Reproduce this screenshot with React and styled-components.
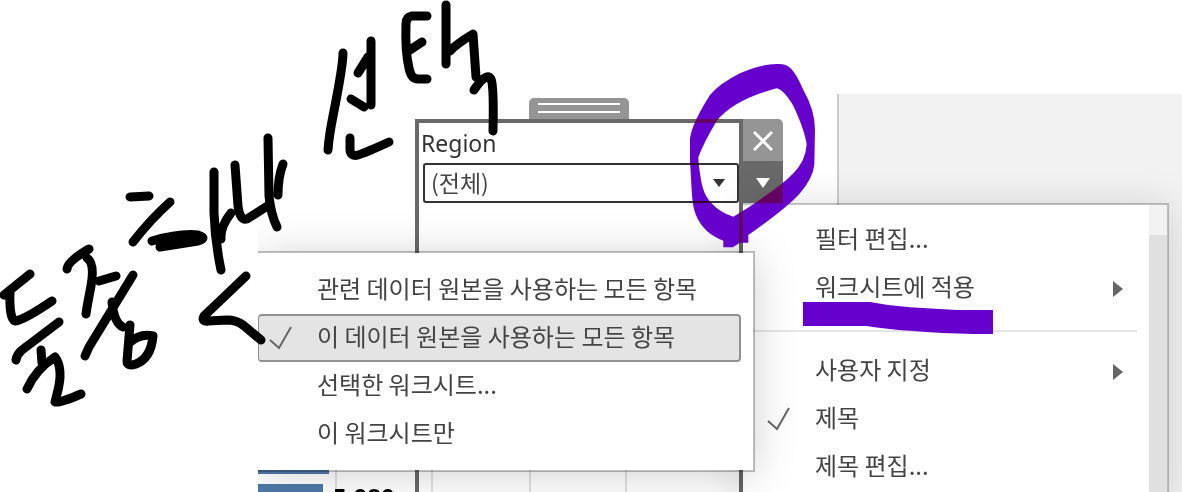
import React from "react";
import styled, { createGlobalStyle } from "styled-components";

const applyItems = [
  { label: "관련 데이터 원본을 사용하는 모든 항목" },
  { label: "이 데이터 원본을 사용하는 모든 항목", checked: true },
  { label: "선택한 워크시트..." },
  { label: "이 워크시트만" },
];

const filterItems = [{ label: "필터 편집..." }, { label: "워크시트에 적용", more: true }];

const titleItems = [
  { label: "사용자 지정", more: true },
  { label: "제목", checked: true },
  { label: "제목 편집..." },
];

const penStrokes = [
  // 둘
  "M30 273L4 294M10 289Q9 318 15 320Q24 319 52 300",
  "M59 321L22 349Q17 353 16 359M41 349L42 362",
  "M27 388Q36 368 55 356Q64 368 57 393L55 401Q60 402 81 393",
  // 중
  "M67 268Q68 260 89 248M87 257Q95 262 91 285Q87 305 86 313M99 280L116 275",
  "M133 274L89 346L85 355M112 301Q114 322 123 326",
  "M130 324L127 360Q127 366 136 363Q151 357 153 335Q140 332 129 342",
  // 하나
  "M130 196L149 195M170 201Q150 219 133 241",
  "M152 240Q180 232 198 234Q208 237 198 240L160 246",
  "M214 171L214 212Q215 240 221 269M231 212Q220 226 221 238",
  "M235 164L238 205Q240 220 247 218L269 204",
  "M268 137L269 195Q271 214 277 226M283 163Q278 176 278 194",
  // <
  "M246 275L204 315Q201 321 208 320L227 319Q236 319 243 324L261 339",
  // 선
  "M343 52Q343 65 333 115Q329 135 328 149M371 40L371 104M368 56L358 72M351 98L364 106",
  "M350 137L350 149Q351 156 358 154Q365 152 389 141",
  // 택
  "M427 15L412 15Q406 16 406 23Q405 50 409 67Q411 78 418 78L427 78M422 41L410 49",
  "M446 4L446 63M450 50Q455 44 473 33L476 76M474 89Q486 71 491 78Q494 85 493 130",
];

const Check = () => (
  <CheckIcon viewBox="0 0 24 24" aria-hidden="true">
    <path d="M1 14L10 22L22 1" />
  </CheckIcon>
);

const MenuItem = ({ item, selected }) => (
  <Item
    type="button"
    role={item.checked ? "menuitemcheckbox" : "menuitem"}
    aria-checked={item.checked ? true : undefined}
    $selected={selected}
  >
    <Mark>{item.checked && <Check />}</Mark>
    <Label>{item.label}</Label>
    {item.more && (
      <MoreIcon viewBox="0 0 10 16" aria-hidden="true">
        <path d="M0 0L10 8L0 16Z" />
      </MoreIcon>
    )}
  </Item>
);

const App = () => {
  return (
    <Root>
      <GlobalStyle />
      <Dashboard>
        <Worksheet>
          <Chart>
            <Bar $width={71} />
            <BarRow>
              <Bar $width={65} />
              <span>5,080</span>
            </BarRow>
          </Chart>
          <FilterZone>
            <Handle>
              <i />
              <i />
            </Handle>
            <FilterRow>
              <Filter>
                <label htmlFor="region">Region</label>
                <SelectBox>
                  <select id="region" defaultValue="all">
                    <option value="all">(전체)</option>
                  </select>
                  <svg viewBox="0 0 12 8" aria-hidden="true">
                    <path d="M0 0H12L6 8Z" />
                  </svg>
                </SelectBox>
              </Filter>
              <Tools>
                <ToolButton type="button" aria-label="닫기">
                  <svg width="20" height="20" viewBox="0 0 20 20">
                    <path d="M1 1L19 19M19 1L1 19" stroke="#fff" strokeWidth="3" />
                  </svg>
                </ToolButton>
                <ToolButton type="button" aria-label="메뉴" $active>
                  <svg width="14" height="10" viewBox="0 0 14 10">
                    <path d="M0 0H14L7 10Z" fill="#fff" />
                  </svg>
                </ToolButton>
              </Tools>
            </FilterRow>
          </FilterZone>
        </Worksheet>
        <SidePane />
        <FilterMenu role="menu">
          <MenuList>
            {filterItems.map((item) => (
              <MenuItem key={item.label} item={item} />
            ))}
            <Divider />
            {titleItems.map((item) => (
              <MenuItem key={item.label} item={item} />
            ))}
          </MenuList>
          <ScrollBar>
            <div />
          </ScrollBar>
        </FilterMenu>
        <ApplyMenu role="menu">
          {applyItems.map((item) => (
            <MenuItem key={item.label} item={item} selected={item.checked} />
          ))}
        </ApplyMenu>
      </Dashboard>
      <Marker viewBox="0 0 1182 492" aria-hidden="true">
        <g transform="translate(640 50) scale(0.3333)">
          <path
            fillRule="evenodd"
            d="M410 42Q440 40 455 58Q472 78 490 120Q525 180 525 240L523 345Q518 385 480 430Q440 475 325 555V578H300L278 592H250V572Q190 550 168 495Q158 475 155 420L150 330V265Q156 220 210 135Q240 100 300 70Q360 43 410 42Z
            M410 115Q430 118 460 167Q496 245 500 285Q496 335 460 370Q430 402 375 438Q340 465 280 500Q240 488 210 455Q190 430 184 395Q176 350 175 322Q190 280 230 213Q280 150 410 115Z"
          />
        </g>
        <g transform="translate(730 190) scale(0.3333)">
          <path d="M219 336H420Q480 348 540 352L680 360H789V432H730Q640 430 540 422Q470 418 410 408H219Z" />
        </g>
      </Marker>
      <Pen viewBox="0 0 1182 492" aria-hidden="true">
        <g transform="translate(0 1)">
          {penStrokes.map((d) => (
            <path key={d} d={d} />
          ))}
        </g>
      </Pen>
    </Root>
  );
};

export default App;

const GlobalStyle = createGlobalStyle`
  * {
    box-sizing: border-box;
  }
  body {
    margin: 0;
    background: #ffffff;
    color: #444444;
    font-family: "Noto Sans", "Noto Sans CJK KR", sans-serif;
  }
  button, select {
    margin: 0;
    padding: 0;
    border: none;
    background: none;
    color: inherit;
    font-family: "Noto Sans CJK KR", sans-serif;
  }
`;

const Root = styled.div`
  position: relative;
  display: flex;
  height: 100vh;
  padding-left: 258px;
  overflow: hidden;
`;

const Dashboard = styled.div`
  position: relative;
  display: flex;
  flex: 1;
  overflow: hidden;
`;

const Worksheet = styled.div`
  display: grid;
  flex: 0 0 579px;
  & > * {
    grid-area: 1 / 1;
  }
`;

const Chart = styled.div`
  display: flex;
  flex-direction: column;
  gap: 10px;
  height: 100vh;
  padding-top: 470px;
  overflow: hidden;
  background: linear-gradient(#e0e0e0, #e0e0e0) 77px 470px / 2px 100% no-repeat,
    linear-gradient(#e0e0e0, #e0e0e0) 173px 470px / 2px 100% no-repeat,
    linear-gradient(#e0e0e0, #e0e0e0) 271px 470px / 2px 100% no-repeat,
    linear-gradient(#e0e0e0, #e0e0e0) 367px 470px / 2px 100% no-repeat;
`;

const Bar = styled.div`
  flex: none;
  width: ${(props) => props.$width}px;
  height: 4px;
  background: #4e79a7;
`;

const BarRow = styled.div`
  display: flex;
  gap: 10px;
  color: #000000;
  font-size: 24px;
  font-weight: bold;
  line-height: 26px;
  ${Bar} {
    height: 26px;
  }
`;

const FilterZone = styled.div`
  display: flex;
  flex-direction: column;
  height: 100vh;
  padding: 98px 54px 0 157px;
`;

const Handle = styled.div`
  display: flex;
  flex: none;
  flex-direction: column;
  gap: 6px;
  width: 100px;
  height: 21px;
  margin-left: 114px;
  padding: 5px 9px;
  border-radius: 5px 5px 0 0;
  background: #959595;
  & > i {
    height: 2px;
    background: #ffffff;
  }
`;

const FilterRow = styled.div`
  display: flex;
  flex: 1;
`;

const Filter = styled.div`
  flex: 1;
  border: 4px solid #696969;
  border-bottom: none;
  padding: 4px 0 0 4px;
  & > label {
    display: block;
    height: 36px;
    margin-left: -2px;
    color: #333333;
    font-size: 23px;
    line-height: 32px;
  }
`;

const SelectBox = styled.div`
  display: grid;
  align-items: center;
  & > * {
    grid-area: 1 / 1;
  }
  select {
    width: 100%;
    height: 40px;
    padding: 0 0 2px 6px;
    border: 2px solid #333333;
    border-radius: 3px;
    background: #ffffff;
    appearance: none;
    font-size: 23px;
  }
  svg {
    justify-self: end;
    width: 12px;
    height: 8px;
    margin-right: 14px;
    fill: #333333;
    pointer-events: none;
  }
`;

const Tools = styled.div`
  display: flex;
  flex-direction: column;
  width: 40px;
`;

const ToolButton = styled.button`
  display: flex;
  align-items: center;
  justify-content: center;
  height: 42px;
  padding-top: 2px;
  border-radius: ${(props) => (props.$active ? "0" : "0 5px 0 0")};
  background: ${(props) => (props.$active ? "#696969" : "#959595")};
`;

const SidePane = styled.div`
  flex: 1;
  margin-top: 94px;
  border-left: 2px solid #cccccc;
  background: #f2f2f2;
`;

const FilterMenu = styled.div`
  position: absolute;
  top: 203px;
  left: 485px;
  display: flex;
  width: 426px;
  border: 2px solid rgba(0, 0, 0, 0.22);
  border-left: none;
  background: #ffffff;
  background-clip: padding-box;
  box-shadow: 0 4px 40px rgba(0, 0, 0, 0.15);
`;

const MenuList = styled.div`
  flex: 1;
  padding: 11px 12px 11px 0;
`;

const ApplyMenu = styled.div`
  position: absolute;
  top: 251px;
  left: 0;
  width: 497px;
  padding: 13px 12px 12px 0;
  border: 2px solid rgba(0, 0, 0, 0.25);
  border-left: none;
  background: #ffffff;
  background-clip: padding-box;
  box-shadow: 0 4px 40px rgba(0, 0, 0, 0.18);
`;

const Mark = styled.span`
  display: flex;
  flex: none;
  width: 48px;
`;

const Item = styled.button`
  display: flex;
  align-items: center;
  width: 100%;
  height: 48px;
  padding: 0 14px 0 24px;
  font-size: 24px;
  text-align: left;
  ${ApplyMenu} & {
    padding-left: 10px;
    border: 2px solid ${(props) => (props.$selected ? "#929292" : "transparent")};
    border-left-width: 1px;
    border-radius: 4px;
    background: ${(props) => (props.$selected ? "#e4e4e4" : "transparent")};
  }
`;

const Label = styled.span`
  flex: 1;
  padding-bottom: 5px;
  white-space: nowrap;
`;

const CheckIcon = styled.svg`
  width: 24px;
  height: 24px;
  fill: none;
  stroke: #666666;
  stroke-width: 2;
`;

const MoreIcon = styled.svg`
  width: 10px;
  height: 16px;
  margin-top: 2px;
  fill: #666666;
`;

const Divider = styled.hr`
  height: 2px;
  margin: 18px 0 15px;
  border: none;
  background: #e5e5e5;
`;

const ScrollBar = styled.div`
  width: 18px;
  padding-top: 30px;
  background: #f2f2f2;
  & > div {
    height: 100%;
    border-radius: 2px;
    background: #e0e0e0;
  }
`;

const Overlay = styled.svg`
  position: absolute;
  top: 0;
  left: 0;
  width: 1182px;
  height: 492px;
  pointer-events: none;
`;

const Marker = styled(Overlay)`
  fill: #6600cc;
  mix-blend-mode: darken;
`;

const Pen = styled(Overlay)`
  fill: none;
  stroke: #000000;
  stroke-width: 9;
  stroke-linecap: round;
  stroke-linejoin: round;
`;
